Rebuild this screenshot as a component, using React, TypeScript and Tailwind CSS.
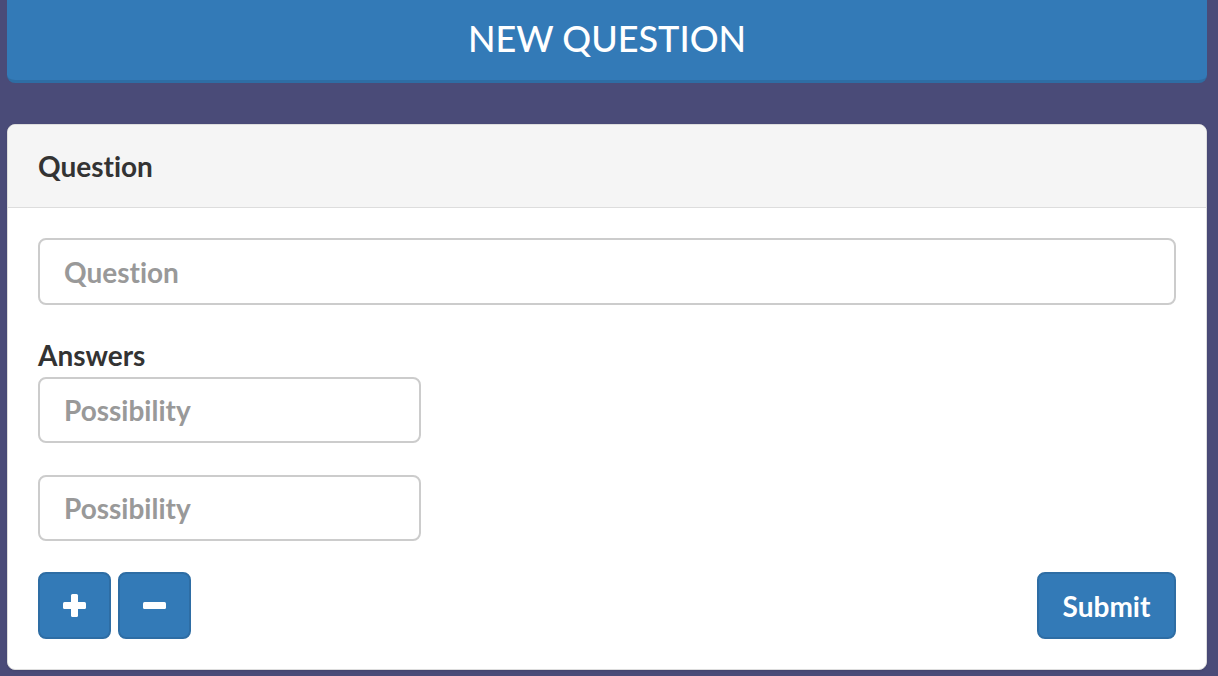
export default function App() {
  return (
    <div className="min-h-screen bg-[#4a4b78] pl-[7px] pr-[11px] pb-[6px] font-['Lato','Liberation_Sans',sans-serif] [font-variant-ligatures:none]">
      <div className="h-[83px] pb-[4px] bg-[#337ab7] border-b-[3px] border-[#2e6da4] rounded-b-[8px] flex items-center justify-center text-white text-[36px] font-medium leading-none">
        NEW QUESTION
      </div>

      <div className="mt-[41px] bg-white rounded-[8px] border border-[#ddd] shadow-[0_1px_2px_rgba(0,0,0,0.1)] overflow-hidden">
        <div className="h-[83px] bg-[#f5f5f5] border-b border-[#ddd] px-[30px] flex items-center text-[28px] font-bold text-[#333]">
          Question
        </div>
        <div className="p-[30px] text-[#333]">
          <input
            className="block w-full h-[67px] border-2 border-[#ccc] rounded-[8px] px-[24px] text-[28px] font-bold placeholder:text-[#999] outline-none"
            placeholder="Question"
          />
          <label className="block mt-[30px] mb-[2px] text-[28px] font-bold leading-[40px]">Answers</label>
          <input
            className="block w-[383px] h-[66px] border-2 border-[#ccc] rounded-[8px] px-[24px] text-[28px] font-bold placeholder:text-[#999] outline-none"
            placeholder="Possibility"
          />
          <input
            className="block mt-[32px] w-[383px] h-[66px] border-2 border-[#ccc] rounded-[8px] px-[24px] text-[28px] font-bold placeholder:text-[#999] outline-none"
            placeholder="Possibility"
          />
          <div className="mt-[31px] flex justify-between">
            <div className="flex gap-[7px]">
              <button className="w-[73px] h-[67px] bg-[#337ab7] border-2 border-[#2e6da4] rounded-[8px] flex items-center justify-center">
                <svg width="23" height="23" viewBox="0 0 23 23">
                  <rect x="8" y="0" width="7" height="23" rx="1.5" fill="white" />
                  <rect x="0" y="8" width="23" height="7" rx="1.5" fill="white" />
                </svg>
              </button>
              <button className="w-[73px] h-[67px] bg-[#337ab7] border-2 border-[#2e6da4] rounded-[8px] flex items-center justify-center">
                <svg width="23" height="7" viewBox="0 0 23 7">
                  <rect x="0" y="0" width="23" height="7" rx="1.5" fill="white" />
                </svg>
              </button>
            </div>
            <button className="w-[139px] h-[67px] bg-[#337ab7] border-2 border-[#2e6da4] rounded-[8px] text-white text-[28px] font-bold">
              Submit
            </button>
          </div>
        </div>
      </div>
    </div>
  )
}
